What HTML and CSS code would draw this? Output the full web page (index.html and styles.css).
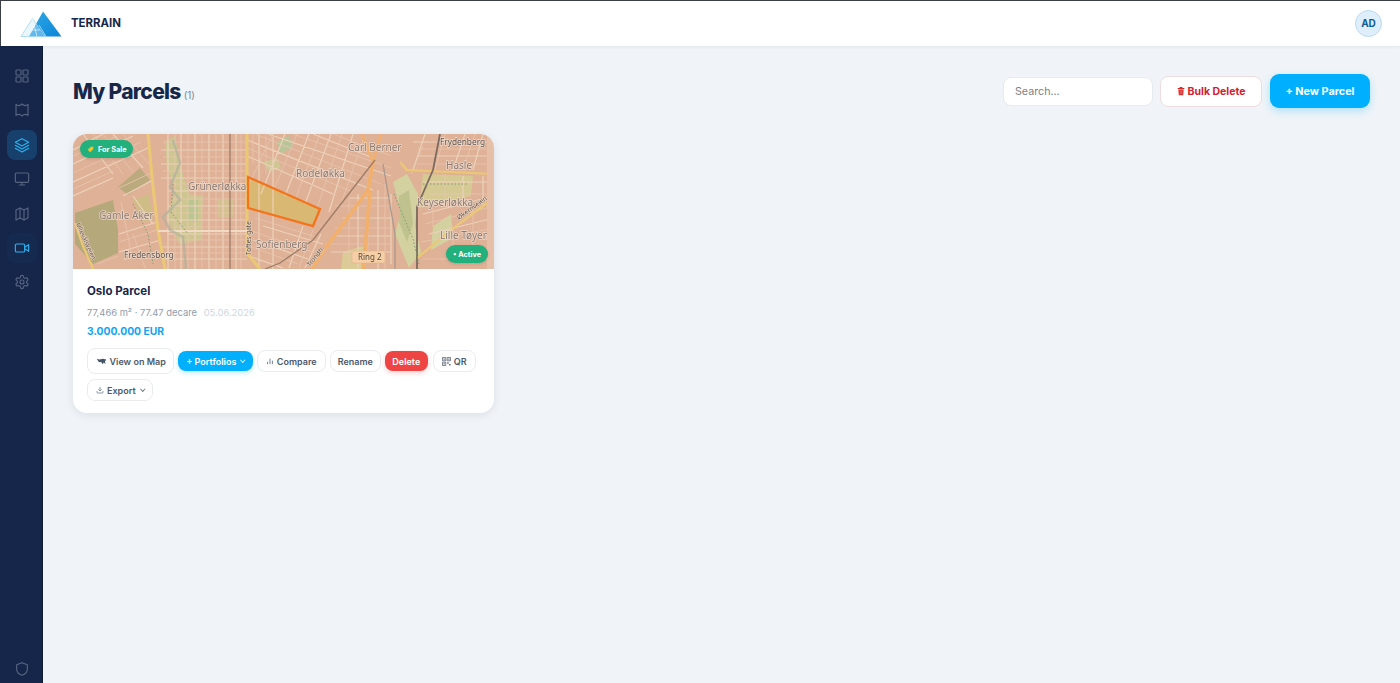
FILE: index.html
```html
<!DOCTYPE html>
<html>
<head>
    <meta charset="UTF-8">
    <meta name="viewport" content="width=device-width, initial-scale=1.0">
    <title>Terrain - My Parcels</title>
    <link rel="stylesheet" href="styles.css">
</head>
<body>
    <div class="topbar">
        <div class="brand">
            <svg class="logo" viewBox="0 0 42 26">
                <defs>
                    <linearGradient id="peak" x1="0" y1="0" x2="1" y2="1">
                        <stop offset="0" stop-color="#2fa8e8"/>
                        <stop offset="1" stop-color="#0b86d6"/>
                    </linearGradient>
                </defs>
                <path d="M23 0.5 L41.5 25.5 H9 Z" fill="url(#peak)"/>
                <path d="M12.5 7.5 L1 25.5 H25 Z" fill="#cdeafa" fill-opacity=".4" stroke="#9ad6f5" stroke-width=".8"/>
                <path d="M12.5 7.5 L7 25.5 M12.5 7.5 L17 25.5 M5 19 H20" stroke="#e8f6fd" stroke-width=".7" fill="none"/>
                <path d="M19 14 L26 25.5" stroke="#d5effc" stroke-width=".7" fill="none"/>
            </svg>
            <span class="brand-name">TERRAIN</span>
        </div>
        <div class="avatar">AD</div>
    </div>

    <div class="layout">
        <div class="sidebar">
            <div class="side-top">
                <div class="side-item">
                    <svg class="side-icon" viewBox="0 0 24 24"><rect x="3" y="3" width="7.5" height="7.5" rx="1"/><rect x="13.5" y="3" width="7.5" height="7.5" rx="1"/><rect x="3" y="13.5" width="7.5" height="7.5" rx="1"/><rect x="13.5" y="13.5" width="7.5" height="7.5" rx="1"/></svg>
                </div>
                <div class="side-item">
                    <svg class="side-icon" viewBox="0 0 24 24"><path d="M3 3.5 C6 6 9 6 12 3 C15 6 18 6 21 3.5 V20 C18 18 15 18 12 21 C9 18 6 18 3 20 Z"/></svg>
                </div>
                <div class="side-item active">
                    <svg class="side-icon" viewBox="0 0 24 24"><path d="M12 2.5 L22 8 L12 13.5 L2 8 Z"/><path d="M2 12.5 L12 18 L22 12.5"/><path d="M2 17 L12 22.5 L22 17"/></svg>
                </div>
                <div class="side-item">
                    <svg class="side-icon" viewBox="0 0 24 24"><rect x="2" y="3" width="20" height="14" rx="2"/><path d="M8 21 H16 M12 17 V21"/></svg>
                </div>
                <div class="side-item">
                    <svg class="side-icon" viewBox="0 0 24 24"><path d="M3 6 L9 3 L15 6 L21 3 V18 L15 21 L9 18 L3 21 Z"/><path d="M9 3 V18 M15 6 V21"/></svg>
                </div>
                <div class="side-item current">
                    <svg class="side-icon" viewBox="0 0 24 24"><rect x="2" y="6" width="14" height="12" rx="2"/><path d="M16 13 L22 17 V7 L16 11"/></svg>
                </div>
                <div class="side-item">
                    <svg class="side-icon" viewBox="0 0 24 24"><circle cx="12" cy="12" r="3"/><path d="M12.2 2 h-.4 a2 2 0 0 0-2 2 v.2 a2 2 0 0 1-1 1.7 l-.4.3 a2 2 0 0 1-2 0 l-.2-.1 a2 2 0 0 0-2.7.7 l-.2.4 a2 2 0 0 0 .7 2.7 l.2.1 a2 2 0 0 1 1 1.7 v.5 a2 2 0 0 1-1 1.7 l-.2.1 a2 2 0 0 0-.7 2.7 l.2.4 a2 2 0 0 0 2.7.7 l.2-.1 a2 2 0 0 1 2 0 l.4.3 a2 2 0 0 1 1 1.7 v.2 a2 2 0 0 0 2 2 h.4 a2 2 0 0 0 2-2 v-.2 a2 2 0 0 1 1-1.7 l.4-.3 a2 2 0 0 1 2 0 l.2.1 a2 2 0 0 0 2.7-.7 l.2-.4 a2 2 0 0 0-.7-2.7 l-.2-.1 a2 2 0 0 1-1-1.7 v-.5 a2 2 0 0 1 1-1.7 l.2-.1 a2 2 0 0 0 .7-2.7 l-.2-.4 a2 2 0 0 0-2.7-.7 l-.2.1 a2 2 0 0 1-2 0 l-.4-.3 a2 2 0 0 1-1-1.7 V4 a2 2 0 0 0-2-2 Z"/></svg>
                </div>
            </div>
            <div class="side-item side-bottom">
                <svg class="side-icon" viewBox="0 0 24 24"><path d="M12 2.5 L20 5.5 V12 C20 17 16.5 20 12 21.5 C7.5 20 4 17 4 12 V5.5 Z"/></svg>
            </div>
        </div>

        <div class="main">
            <div class="page-head">
                <div class="title-wrap">
                    <h1>My Parcels</h1>
                    <span class="count">(1)</span>
                </div>
                <div class="head-actions">
                    <input class="search" type="text" placeholder="Search...">
                    <button class="btn-bulk">
                        <svg class="trash" viewBox="0 0 12 14"><path d="M1 2.5 H11 V4 H1 Z M4 1 H8 V2.5 H4 Z M2 4.6 H10 L9.3 13.4 H2.7 Z" fill="#dc2626"/><path d="M4.5 6 V12 M6 6 V12 M7.5 6 V12" stroke="#f5b5b5" stroke-width=".5"/></svg>
                        Bulk Delete
                    </button>
                    <button class="btn-new">+ New Parcel</button>
                </div>
            </div>

            <div class="parcel-card">
                <div class="map">
                    <svg class="map-svg" viewBox="0 0 421 135" preserveAspectRatio="none">
                        <rect width="421" height="135" fill="#dfb196"/>
                        <!-- parks -->
                        <path d="M2 79 L40 66 L45 96 L45 119 L20 130 L2 110 Z" fill="#b5a87a"/>
                        <path d="M45 53 L67 34 L77 46 L55 61 Z" fill="#bbaa7e"/>
                        <path d="M60 66 L76 60 L80 86 L70 88 Z" fill="#cfbd88"/>
                        <path d="M92 8 L102 2 L108 34 L116 60 L130 62 L128 106 L106 110 L94 84 L102 54 L94 34 Z" fill="#cdc690"/>
                        <path d="M115 66 L125 66 L125 88 L115 88 Z" fill="#b9c690"/>
                        <path d="M144 66 L160 66 L160 84 L144 84 Z" fill="#d4c090"/>
                        <path d="M204 8 L216 2 L220 12 L208 20 Z" fill="#b8c598"/>
                        <path d="M190 28 L204 24 L208 34 L196 38 Z" fill="#cfc894"/>
                        <path d="M320 48 L334 40 L345 60 L342 92 L348 118 L336 134 L322 100 L328 78 Z" fill="#d3d1a0"/>
                        <path d="M326 62 L336 56 L340 90 L334 108 L326 88 Z" fill="#c0c28e"/>
                        <path d="M350 40 L400 42 L398 62 L362 70 L346 74 Z" fill="#d6ca94"/>
                        <path d="M360 92 L378 80 L380 104 L358 116 Z" fill="#d3d1a0"/>
                        <path d="M270 118 L290 112 L292 135 L268 135 Z" fill="#dbcb96"/>
                        <path d="M175 43 L247 75 L240 92 L175 74 Z" fill="#d8bb78"/>
                        <!-- minor streets -->
                        <path class="streets" d="M95 0 V135 M108 0 V135 M122 0 V135 M136 0 V135 M150 0 V135 M163 0 V135 M186 0 V135 M200 0 V135
                            M88 16 H174 M88 30 H174 M88 44 H174 M95 57 H174 M95 72 H174 M95 86 H174 M95 100 H174 M88 113 H174 M92 125 H174
                            M0 30 L60 2 M0 48 L75 14 M0 62 L40 44 M50 62 L80 46 M0 16 L30 0 M10 0 L40 40 M40 0 L70 34 M60 62 L80 90 M46 100 L84 88 M46 118 L88 106
                            M174 22 L260 60 M174 6 L300 56 M195 0 L318 42 M240 0 L300 24 M190 92 L250 110 M180 106 L235 125 M176 122 L210 134
                            M212 0 L188 60 M236 0 L212 62 M258 0 L232 70 M280 0 L256 78 M230 92 L216 134 M248 100 L232 134
                            M276 64 H318 M270 84 H318 M262 102 H318 M258 118 H318 M285 60 V135 M305 56 V135 M318 60 V130
                            M352 0 L340 36 M392 0 L380 36 M410 0 L400 36 M340 8 H421 M345 22 H421 M350 80 L421 62 M356 100 L421 84 M350 48 H421 M390 42 V70 M410 42 V70"/>
                        <path class="streets fine" d="M102 0 V135 M115 0 V135 M129 0 V135 M143 0 V135 M168 0 V135 M193 0 V40 M180 0 V30
                            M90 8 H174 M90 23 H174 M90 37 H174 M100 50 H174 M100 65 H174 M100 79 H174 M100 93 H174 M95 106 H174 M95 119 H174
                            M0 22 L44 2 M0 39 L68 8 M0 55 L40 37 M46 54 L80 38 M20 0 L50 40 M30 0 L60 38 M50 0 L76 30 M48 68 L58 118 M60 100 L72 134 M24 130 L45 122 M46 108 L84 96 M50 126 L90 116
                            M174 14 L280 58 M182 0 L308 50 M220 0 L318 34 M260 0 L318 22 M182 84 L240 102 M176 96 L240 118 M176 112 L225 130
                            M200 0 L176 50 M224 0 L200 58 M247 0 L222 66 M269 0 L244 74 M290 6 L268 70 M240 96 L226 134 M258 106 L248 124
                            M262 72 H318 M262 94 H318 M252 110 H318 M276 64 V135 M295 60 V118 M312 50 V135
                            M350 12 L338 40 M372 0 L362 36 M402 0 L390 36 M345 15 H421 M344 30 H421 M352 90 L421 72 M348 108 L421 94 M356 60 H421 M372 40 V68 M360 74 V92 M400 72 V130 M380 92 V130 M350 125 H421"/>
                        <!-- main roads -->
                        <path class="road-yellow" d="M75 0 L80 53 L85 96 L92 135"/>
                        <path class="road-yellow" d="M174 0 V119 L187 135"/>
                        <path class="road-light" d="M85 97 H174"/>
                        <path class="road-yellow thin" d="M327 28 L334 36 L421 40"/>
                        <path class="road-yellow thin" d="M414 69 L387 89 L350 119 L342 126"/>
                        <path class="road-yellow thin" d="M2 89 L10 112 L20 135"/>
                        <path class="road-orange" d="M300 28 L295 56 L249 119 L239 135"/>
                        <path class="road-orange" d="M297 56 L292 118 L290 135"/>
                        <path class="road-orange thin" d="M289 0 L300 28 L308 0"/>
                        <path class="rail" d="M157 0 V135"/>
                        <path class="rail" d="M302 26 L240 106 L207 129 L192 135"/>
                        <path class="rail dark" d="M367 0 L360 36 L344 73 L344 135"/>
                        <path class="rail grey" d="M310 30 L322 100 L322 135"/>
                        <path class="rail dotted" d="M321 60 L340 105 L346 130"/>
                        <path class="rail dotted" d="M350 50 H395"/>
                        <path class="rail dotted" d="M100 50 L98 78 L115 100"/>
                        <path class="rail dotted" d="M60 70 L75 100 L80 130"/>
                        <path class="water" d="M100 6 L107 29 L97 53 L107 66 L90 83 L97 96 L110 103 L113 135"/>
                        <path class="parcel" d="M175 43 L247 75 L240 92 L175 74 Z"/>
                        <!-- labels -->
                        <text class="map-label" x="115" y="56">Grünerløkka</text>
                        <text class="map-label" x="26" y="85">Gamle Aker</text>
                        <text class="map-label small" x="51" y="124">Fredensborg</text>
                        <text class="map-label" x="183" y="114">Sofienberg</text>
                        <text class="map-label" x="223" y="43">Rodeløkka</text>
                        <text class="map-label" x="275" y="17">Carl Berner</text>
                        <text class="map-label small" x="367" y="11">Frydenberg</text>
                        <text class="map-label" x="373" y="35">Hasle</text>
                        <text class="map-label" x="344" y="72">Keyserløkka</text>
                        <text class="map-label" x="367" y="105">Lille Tøyen</text>
                        <text class="street-label" transform="translate(3 90) rotate(66)">Ullevålsveien</text>
                        <text class="street-label" transform="translate(178 121) rotate(-90)">Toftes gate</text>
                        <text class="street-label" transform="translate(386 86) rotate(-36)">Økernveien</text>
                        <rect class="ring-box" x="279" y="117" width="33" height="12" rx="1"/>
                        <text class="ring-label" x="285" y="126">Ring 2</text>
                        <text class="street-label" transform="translate(237 133) rotate(-52)">Trondh.</text>
                        <rect class="map-edge" x="414" width="7" height="135"/>
                    </svg>
                    <div class="badge badge-sale">
                        <svg class="tag" viewBox="0 0 10 10"><path d="M5.5 1 H9 V4.5 L4.5 9 L1 5.5 Z" fill="#fbbf24"/></svg>
                        For Sale
                    </div>
                    <div class="badge badge-active">• Active</div>
                </div>

                <div class="card-body">
                    <div class="parcel-name">Oslo Parcel</div>
                    <div class="parcel-meta">77,466 m² · 77.47 decare <span class="parcel-date">05.06.2026</span></div>
                    <div class="parcel-price">3.000.000 EUR</div>
                    <div class="card-actions">
                        <button class="act act-map">
                            <svg class="act-icon wide" viewBox="0 0 12 8"><path d="M0.5 1 L4 1.8 L7.5 0.8 L11.5 1.6 L10 4 L10.5 6.8 L8.5 5 L7.5 7 L5.5 4.5 L3 4.8 L2 3 Z" fill="#475569"/></svg>
                            View on Map
                        </button>
                        <button class="act act-blue">+ Portfolios <span class="caret"></span></button>
                        <button class="act">
                            <svg class="act-icon" viewBox="0 0 10 10"><path d="M2 9 V6 M5 9 V2 M8 9 V4.5" stroke="#64748b" stroke-width="1.1"/></svg>
                            Compare
                        </button>
                        <button class="act act-rename">Rename</button>
                        <button class="act act-red">Delete</button>
                        <button class="act act-qr">
                            <svg class="act-icon qr" viewBox="0 0 10 10"><path d="M0.5 0.5 H4.2 V4.2 H0.5 Z M5.8 0.5 H9.5 V4.2 H5.8 Z M0.5 5.8 H4.2 V9.5 H0.5 Z" fill="none" stroke="#5b6675" stroke-width=".9"/><path d="M1.7 1.7 H3 V3 H1.7 Z M7 1.7 H8.3 V3 H7 Z M1.7 7 H3 V8.3 H1.7 Z M5.8 5.8 H7.4 V7.4 H5.8 Z M7.9 7.9 H9.5 V9.5 H7.9 Z" fill="#5b6675"/></svg>
                            QR
                        </button>
                        <button class="act">
                            <svg class="act-icon" viewBox="0 0 24 24"><path d="M3 15 V19 A2 2 0 0 0 5 21 H19 A2 2 0 0 0 21 19 V15 M7 10 L12 15 L17 10 M12 15 V3" fill="none" stroke="#64748b" stroke-width="2.2"/></svg>
                            Export <span class="caret"></span>
                        </button>
                    </div>
                </div>
            </div>
        </div>
    </div>
</body>
</html>
```

FILE: styles.css
```css
* {
    box-sizing: border-box;
}

html, body {
    height: 100%;
}

body {
    margin: 0;
    background: #f0f4f8;
    font-family: 'Inter', 'Liberation Sans', sans-serif;
    color: #16274a;
    overflow: hidden;
}

.topbar {
    height: 46px;
    background: white;
    border-top: 1px solid #3a3f4a;
    border-left: 1px solid #3a3f4a;
    padding: 0 19px 0 19px;
    display: flex;
    align-items: center;
    justify-content: space-between;
    box-shadow: 0 1px 3px rgba(15, 23, 42, 0.07);
    position: relative;
}

.brand {
    display: flex;
    align-items: center;
    gap: 9px;
}

.logo {
    width: 42px;
    height: 26px;
    margin-top: 1px;
}

.brand-name {
    font-size: 11.4px;
    font-weight: 700;
    color: #16274a;
    margin-bottom: 2px;
}

.avatar {
    width: 27px;
    height: 27px;
    border-radius: 50%;
    background: #dfeefb;
    border: 1px solid #b9daf3;
    color: #0f5c96;
    font-size: 10px;
    font-weight: 700;
    display: flex;
    align-items: center;
    justify-content: center;
    margin-right: -1px;
    margin-bottom: 1px;
}

.layout {
    display: flex;
    height: 637px;
}

.sidebar {
    width: 43px;
    background: #15264a;
    border-right: 1px solid #0f1c38;
    padding: 15px 0 0 1px;
    display: flex;
    flex-direction: column;
    justify-content: space-between;
    align-items: center;
}

.side-top {
    display: flex;
    flex-direction: column;
    gap: 4.4px;
}

.side-item {
    width: 30px;
    height: 30px;
    border-radius: 8px;
    display: flex;
    align-items: center;
    justify-content: center;
}

.side-bottom {
    margin-bottom: -1px;
}

.side-icon {
    width: 16px;
    height: 16px;
    fill: none;
    stroke: #56657f;
    stroke-width: 1.7;
    stroke-linejoin: round;
    stroke-linecap: round;
}

.side-item.active {
    background: #17406d;
}

.side-item.active .side-icon,
.side-item.current .side-icon {
    stroke: #2bb2f0;
}

.side-item.current {
    background: #16294f;
}

.main {
    flex: 1;
    padding: 28px 30px 0;
}

.page-head {
    display: flex;
    align-items: center;
    justify-content: space-between;
    margin-bottom: 26px;
}

.title-wrap {
    display: flex;
    align-items: baseline;
    gap: 3px;
}

.page-head h1 {
    margin: 0;
    font-size: 21px;
    font-weight: 800;
    letter-spacing: -0.7px;
    color: #16274a;
}

.count {
    font-size: 10px;
    color: #7d8a9c;
}

.head-actions {
    display: flex;
    align-items: center;
    gap: 7px;
}

.search {
    width: 150px;
    height: 29px;
    border: 1px solid #e6ebf1;
    border-radius: 8px;
    background: white;
    padding: 0 11px;
    font-family: inherit;
    font-size: 10.7px;
    outline: none;
}

.search::placeholder {
    color: #7a7f87;
}

button {
    font-family: inherit;
    cursor: pointer;
}

.btn-bulk {
    width: 102px;
    height: 31px;
    background: white;
    border: 1px solid #efdcdf;
    border-radius: 8px;
    color: #d3202f;
    font-size: 10.5px;
    font-weight: 700;
    padding: 0;
    display: flex;
    align-items: center;
    justify-content: center;
    gap: 3px;
}

.trash {
    width: 8px;
    height: 10px;
}

.btn-new {
    width: 100px;
    height: 34px;
    margin-left: 1px;
    background: #00b0ff;
    border: none;
    border-radius: 9px;
    color: white;
    font-size: 10.8px;
    font-weight: 700;
    padding: 0;
    box-shadow: 0 3px 8px rgba(0, 176, 255, 0.28);
}

.parcel-card {
    width: 421px;
    background: white;
    border-radius: 14px;
    overflow: hidden;
    box-shadow: 0 2px 8px rgba(15, 23, 42, 0.09);
}

.map {
    height: 135px;
    position: relative;
    overflow: hidden;
}

.map-svg {
    display: block;
    width: 100%;
    height: 100%;
    filter: blur(0.5px);
}

.streets {
    fill: none;
    stroke: #edd2bb;
    stroke-width: 1.2;
}

.streets.fine {
    stroke: #e7c7ae;
    stroke-width: 0.8;
}

.road-yellow {
    fill: none;
    stroke: #ebc974;
    stroke-width: 3;
}

.road-yellow.thin {
    stroke-width: 2.2;
}

.road-light {
    fill: none;
    stroke: #f1dac4;
    stroke-width: 2;
}

.road-orange {
    fill: none;
    stroke: #f2b06e;
    stroke-width: 3.8;
}

.road-orange.thin {
    stroke-width: 2.6;
}

.rail {
    fill: none;
    stroke: #9d7c68;
    stroke-width: 1.3;
}

.rail.dark {
    stroke: #7c6a5e;
    stroke-width: 1.8;
}

.rail.grey {
    stroke: #a8988f;
}

.rail.dotted {
    stroke: #7f9a72;
    stroke-width: 1;
    stroke-dasharray: 1.5 2;
}

.water {
    fill: none;
    stroke: #b3b29c;
    stroke-width: 2.4;
    opacity: .75;
}

.parcel {
    fill: rgba(249, 115, 22, 0.04);
    stroke: #f4741e;
    stroke-width: 2.3;
}

.map-label {
    font-family: 'Noto Sans', sans-serif;
    font-size: 10px;
    fill: #8d7a70;
    stroke: #efd9ca;
    stroke-width: 1.4px;
    paint-order: stroke;
}

.map-label.small {
    font-size: 8.3px;
    fill: #5f534d;
}

.street-label {
    font-family: 'Noto Sans', sans-serif;
    font-size: 6.5px;
    fill: #5f5040;
    stroke: #efd9ca;
    stroke-width: 1px;
    paint-order: stroke;
}

.ring-box {
    fill: #f6cfa6;
    stroke: #e0b48a;
    stroke-width: .6;
}

.ring-label {
    font-family: 'Noto Sans', sans-serif;
    font-size: 8px;
    fill: #54483e;
}

.map-edge {
    fill: #e6bfa8;
}

.badge {
    position: absolute;
    height: 18px;
    border-radius: 9px;
    background: #22b07d;
    color: white;
    font-size: 7.3px;
    font-weight: 700;
    display: flex;
    align-items: center;
    box-shadow: 0 1px 3px rgba(15, 23, 42, 0.15);
}

.badge-sale {
    left: 7px;
    top: 6px;
    width: 53px;
    padding-left: 7px;
    gap: 4px;
}

.tag {
    width: 7px;
    height: 7px;
}

.badge-active {
    right: 6px;
    top: 111px;
    width: 42px;
    justify-content: center;
}

.card-body {
    padding: 15px 14px 12px;
}

.parcel-name {
    font-size: 11.5px;
    font-weight: 700;
    color: #16274a;
    line-height: 15px;
}

.parcel-meta {
    margin-top: 7px;
    font-size: 9.4px;
    line-height: 14px;
    color: #8f9bad;
}

.parcel-date {
    color: #ced7e2;
    margin-left: 4px;
}

.parcel-price {
    margin-top: 4px;
    font-size: 10.3px;
    line-height: 14px;
    font-weight: 700;
    color: #12a5ef;
}

.card-actions {
    margin-top: 10px;
    display: flex;
    flex-wrap: wrap;
    align-items: center;
    gap: 4px;
    row-gap: 5px;
}

.act {
    height: 22px;
    padding: 0 8px;
    background: white;
    border: 1px solid #e8ecf1;
    border-radius: 8px;
    color: #4d5a6c;
    font-size: 9px;
    font-weight: 600;
    display: flex;
    align-items: center;
    gap: 3px;
}

.act-map {
    height: 26px;
    padding: 0 7.5px;
}

.act-blue {
    height: 20px;
    background: #00b0ff;
    border: none;
    color: white;
    box-shadow: 0 2px 5px rgba(0, 176, 255, 0.25);
}

.act-red {
    height: 20px;
    padding: 0 7.5px;
    background: #ef4444;
    border: none;
    color: white;
    box-shadow: 0 2px 5px rgba(239, 68, 68, 0.25);
}

.act-rename {
    padding: 0 7px;
}

.act-qr {
    margin-left: 1px;
}

.act-icon {
    width: 8px;
    height: 8px;
}

.act-icon.wide {
    width: 11px;
    height: 7px;
}

.act-icon.qr {
    width: 9px;
    height: 9px;
}

.caret {
    width: 3.5px;
    height: 3.5px;
    border-right: 1px solid currentColor;
    border-bottom: 1px solid currentColor;
    transform: rotate(45deg);
    margin: -2px 0 0 2px;
    opacity: .8;
}
```
